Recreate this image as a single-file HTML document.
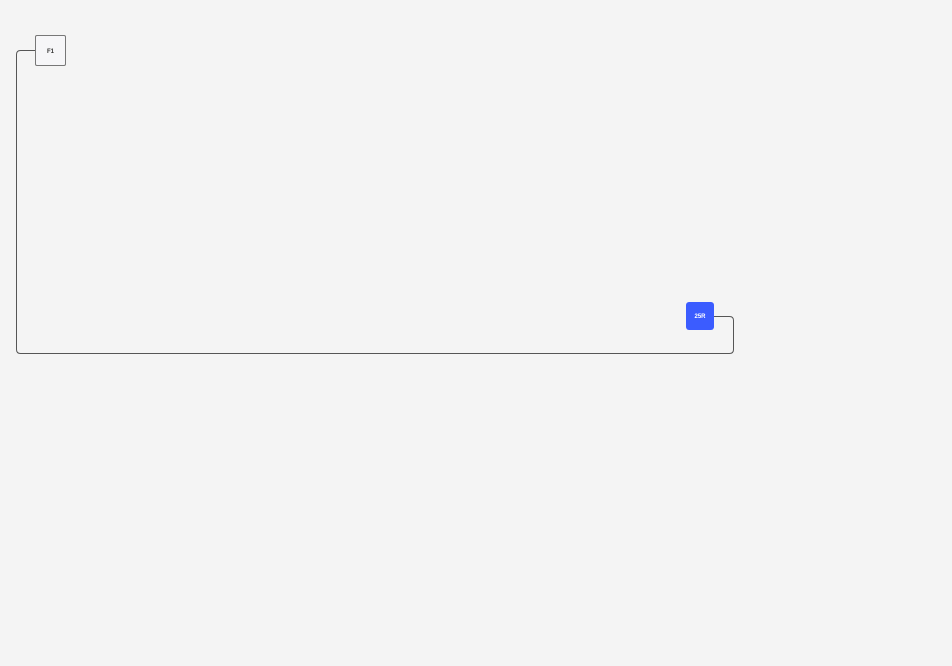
<!DOCTYPE html>
<html><head><style>
html,body{margin:0;padding:0;background:#f4f4f4;width:952px;height:666px;overflow:hidden;font-family:"Liberation Sans",sans-serif;}
.n1{position:absolute;left:35px;top:35px;width:29px;height:29px;border:1px solid #777;background:#f6f6f8;border-radius:2px;font-size:6px;font-weight:bold;color:#333;display:flex;align-items:center;justify-content:center;box-sizing:content-box;padding-top:2px;height:27px}
.n2{position:absolute;left:686px;top:302px;width:28px;height:26px;padding-top:2px;background:#3b5cff;border-radius:3px;font-size:6px;font-weight:bold;color:#fff;display:flex;align-items:center;justify-content:center}
</style></head><body>
<svg width="952" height="666" style="position:absolute;left:0;top:0">
<path d="M35.5 50.5 H20.5 Q16.5 50.5 16.5 54.5 V349.5 Q16.5 353.5 20.5 353.5 H729.5 Q733.5 353.5 733.5 349.5 V320.5 Q733.5 316.5 729.5 316.5 H714" fill="none" stroke="#555" stroke-width="1"/>
</svg>
<div class="n1">F1</div>
<div class="n2">25R</div>
</body></html>
